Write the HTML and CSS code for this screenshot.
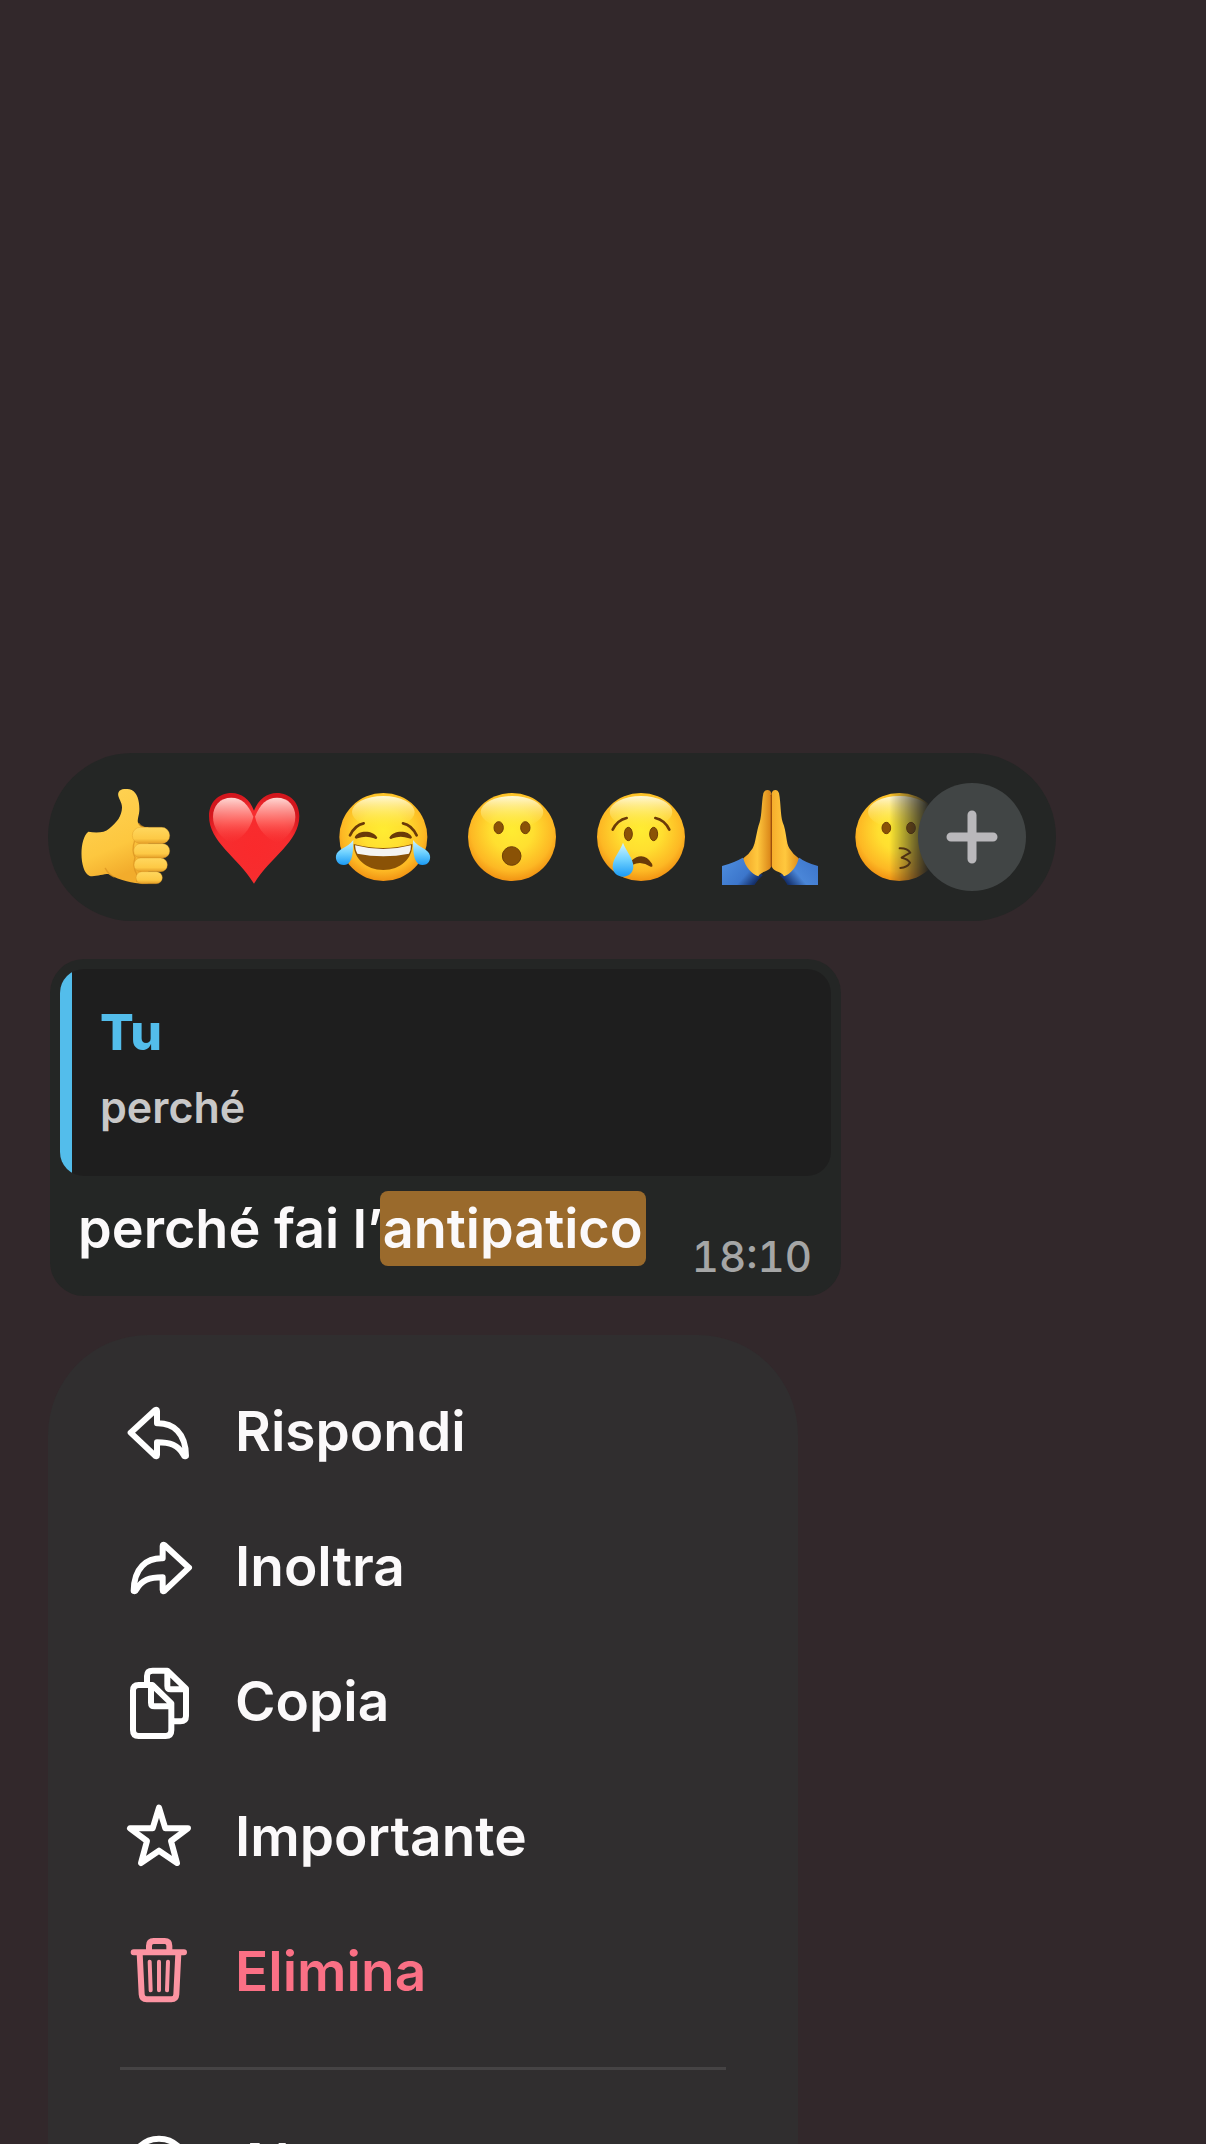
FILE: index.html
```html
<!DOCTYPE html>
<html lang="it">
<head>
<meta charset="utf-8">
<meta name="viewport" content="width=device-width, initial-scale=1">
<title>Messaggio</title>
<link rel="stylesheet" href="styles.css">
</head>
<body>
<svg class="defs" aria-hidden="true">
  <defs>
    <radialGradient id="face" cx="0.5" cy="0.42" r="0.6">
      <stop offset="0" stop-color="#ffec32"/>
      <stop offset="0.4" stop-color="#ffdf30"/>
      <stop offset="0.78" stop-color="#fdb824"/>
      <stop offset="1" stop-color="#ef8c10"/>
    </radialGradient>
    <linearGradient id="shine" x1="0" y1="0" x2="0" y2="1">
      <stop offset="0" stop-color="#fffbe0" stop-opacity="0.95"/>
      <stop offset="1" stop-color="#ffec50" stop-opacity="0"/>
    </linearGradient>
    <linearGradient id="tear" x1="0" y1="0" x2="0" y2="1">
      <stop offset="0" stop-color="#d2f4ff"/>
      <stop offset="0.5" stop-color="#70d2ff"/>
      <stop offset="1" stop-color="#1b9af4"/>
    </linearGradient>
    <radialGradient id="heart" cx="0.5" cy="0.6" r="0.6">
      <stop offset="0" stop-color="#fa2a2c"/>
      <stop offset="0.7" stop-color="#f62d2f"/>
      <stop offset="1" stop-color="#d3161d"/>
    </radialGradient>
    <linearGradient id="heart-shine" x1="0" y1="0" x2="0" y2="1">
      <stop offset="0" stop-color="#ffd8d4"/>
      <stop offset="0.55" stop-color="#ff6a64" stop-opacity="0.8"/>
      <stop offset="1" stop-color="#fa3a38" stop-opacity="0"/>
    </linearGradient>
    <linearGradient id="skin" x1="0" y1="0" x2="0.3" y2="1">
      <stop offset="0" stop-color="#ffd456"/>
      <stop offset="0.7" stop-color="#fdc73f"/>
      <stop offset="1" stop-color="#f2ac2c"/>
    </linearGradient>
    <linearGradient id="finger" x1="0" y1="0" x2="0" y2="1">
      <stop offset="0" stop-color="#ffd75e"/>
      <stop offset="0.7" stop-color="#fdc945"/>
      <stop offset="1" stop-color="#e39c26"/>
    </linearGradient>
    <linearGradient id="palm-left" x1="0" y1="0" x2="1" y2="0">
      <stop offset="0" stop-color="#f0a326"/>
      <stop offset="0.5" stop-color="#ffc83e"/>
      <stop offset="1" stop-color="#d98317"/>
    </linearGradient>
    <linearGradient id="palm-right" x1="1" y1="0" x2="0" y2="0">
      <stop offset="0" stop-color="#e08f1c"/>
      <stop offset="0.5" stop-color="#ffc83e"/>
      <stop offset="1" stop-color="#f5ad2c"/>
    </linearGradient>
    <linearGradient id="sleeve-left" x1="0" y1="0" x2="1" y2="0.6">
      <stop offset="0" stop-color="#4f8fe0"/>
      <stop offset="0.7" stop-color="#3c76cb"/>
      <stop offset="1" stop-color="#14306c"/>
    </linearGradient>
    <linearGradient id="sleeve-right" x1="1" y1="0" x2="0" y2="0.6">
      <stop offset="0" stop-color="#3b73c9"/>
      <stop offset="0.65" stop-color="#4a86d8"/>
      <stop offset="1" stop-color="#14306c"/>
    </linearGradient>
  </defs>
</svg>

<main class="screen">
  <div class="reactions" role="group" aria-label="Reazioni">
    <div class="reaction-list">
      <button class="reaction" type="button" aria-label="Pollice in su">
        <svg viewBox="111 147 288 288">
          <path fill="url(#skin)" d="M145 275C166 279 194 279 207 266C232 246 245 228 246 203C247 185 229 170 236 156C241 145 262 145 275 150C293 160 299 184 298 212C297 228 291 238 294 248C300 260 312 262 325 262L325 430C290 433 250 426 205 402C190 402 165 411 149 408C117 395 117 295 145 275Z"/>
          <path fill="none" stroke="#d99220" stroke-width="4" stroke-linecap="round" opacity="0.7" d="M296 250C300 258 306 261 314 263M196 385Q205 402 222 411M284 302Q274 330 285 352Q277 380 290 402V424"/>
          <g fill="url(#finger)" stroke="#d99220" stroke-width="1">
            <rect x="277" y="262" width="112" height="49" rx="24"/>
            <rect x="281" y="311" width="108" height="43" rx="21"/>
            <rect x="282" y="354" width="100" height="41" rx="20"/>
            <rect x="288" y="395" width="79" height="36" rx="18"/>
          </g>
        </svg>
      </button>
      <button class="reaction" type="button" aria-label="Cuore">
        <svg viewBox="498 147 288 288">
          <path fill="url(#heart)" d="M642 212C655 178 682 159 710 159C750 159 778 188 778 228C778 306 692 350 642 431C592 350 507 306 507 228C507 188 535 159 575 159C603 159 630 178 642 212Z"/>
          <path fill="url(#heart-shine)" d="M640 230C624 192 605 173 574 173C540 173 519 197 519 230C519 265 542 290 570 310C600 300 632 270 640 230Z"/>
          <path fill="url(#heart-shine)" d="M645 230C660 192 680 173 711 173C745 173 766 197 766 230C766 265 743 290 715 310C685 300 653 270 645 230Z"/>
        </svg>
      </button>
      <button class="reaction" type="button" aria-label="Risata con lacrime">
        <svg viewBox="885 147 288 288">
          <circle cx="1030" cy="291" r="132" fill="url(#face)"/>
          <ellipse cx="1030" cy="216" rx="94" ry="48" fill="url(#shine)"/>
          <path fill="none" stroke="#6a3a08" stroke-width="8" stroke-linecap="round" d="M930 286Q945 255 971 250M1130 286Q1115 255 1089 250"/>
          <path fill="#6a3a08" d="M944 292C954 270 1000 270 1012 293Q1009 300 1002 295Q978 286 953 295Q946 299 944 292ZM1048 293C1060 270 1106 270 1116 292Q1114 299 1107 295Q1082 286 1058 295Q1051 300 1048 293Z"/>
          <path fill="#8a5206" d="M941 312Q1030 336 1117 312C1118 355 1082 390 1030 390C978 390 941 355 941 312Z"/>
          <path fill="#f4f4f2" d="M945 316Q1030 338 1113 316Q1113 332 1107 341Q1030 356 952 341Q946 332 945 316Z"/>
          <path fill="url(#tear)" d="M940 300C939 322 942 374 912 375C893 375 886 360 888 347C892 326 922 325 940 300Z"/>
          <path fill="url(#tear)" d="M1119 300C1120 322 1117 374 1147 375C1166 375 1172 360 1170 347C1166 326 1137 325 1119 300Z"/>
        </svg>
      </button>
      <button class="reaction" type="button" aria-label="Stupore">
        <svg viewBox="72 147 288 288">
          <circle cx="216" cy="291" r="132" fill="url(#face)"/>
          <ellipse cx="216" cy="216" rx="94" ry="48" fill="url(#shine)"/>
          <g fill="#8a5206" stroke="#6f3f06" stroke-width="3">
            <ellipse cx="176" cy="263" rx="14" ry="18"/>
            <ellipse cx="256" cy="263" rx="14" ry="18"/>
            <circle cx="215" cy="348" r="28"/>
          </g>
        </svg>
      </button>
      <button class="reaction" type="button" aria-label="Pianto">
        <svg viewBox="459 147 288 288">
          <circle cx="603" cy="291" r="132" fill="url(#face)"/>
          <ellipse cx="603" cy="216" rx="94" ry="48" fill="url(#shine)"/>
          <g fill="#8a5206" stroke="#6f3f06" stroke-width="3">
            <ellipse cx="565" cy="282" rx="12" ry="20"/>
            <ellipse cx="641" cy="282" rx="12" ry="20"/>
          </g>
          <path fill="none" stroke="#6a3a08" stroke-width="8" stroke-linecap="round" d="M518 269Q532 240 560 234M688 269Q674 240 646 234"/>
          <path fill="#6a3a08" d="M574 362Q610 332 636 371Q640 382 632 380Q605 362 578 374Z"/>
          <path fill="url(#tear)" d="M549 308C558 333 580 355 580 379C580 398 567 410 549 410C531 410 518 398 518 379C518 355 541 333 549 308Z"/>
        </svg>
      </button>
      <button class="reaction" type="button" aria-label="Mani giunte">
        <svg viewBox="846 147 288 288">
          <path fill="url(#sleeve-left)" d="M846 378Q885 367 908 353L968 406Q955 418 943 435H846Z"/>
          <path fill="url(#sleeve-right)" d="M1134 378Q1095 367 1078 353L1019 406Q1033 418 1043 435H1134Z"/>
          <path fill="url(#palm-left)" d="M994 160C992 147 974 146 970 160C964 190 966 225 959 247C949 275 947 310 938 325Q928 342 910 355C915 380 935 402 955 409C964 391 992 397 994 376Z"/>
          <path fill="url(#palm-right)" d="M995 160C997 147 1014 146 1017 160C1023 190 1021 225 1028 247C1040 275 1038 310 1048 325Q1058 342 1076 355C1071 380 1052 402 1032 409C1022 391 996 397 995 376Z"/>
          <path fill="none" stroke="#9c4f0c" stroke-width="4" stroke-linecap="round" d="M994 166V378"/>
        </svg>
      </button>
      <button class="reaction reaction-faded" type="button" aria-label="Bacio">
        <svg viewBox="93 147 288 288">
          <circle cx="238" cy="291" r="132" fill="url(#face)"/>
          <ellipse cx="238" cy="216" rx="94" ry="48" fill="url(#shine)"/>
          <g fill="#8a5206" stroke="#6f3f06" stroke-width="3">
            <ellipse cx="199" cy="264" rx="13" ry="17"/>
            <ellipse cx="273" cy="264" rx="13" ry="17"/>
          </g>
          <path fill="none" stroke="#6a3a08" stroke-width="6" stroke-linecap="round" stroke-linejoin="round" d="M239 325Q262 324 271 338Q258 345 245 353Q264 357 270 368Q262 382 241 384"/>
        </svg>
      </button>
    </div>
    <button class="more-reactions" type="button" aria-label="Altre reazioni">
      <svg viewBox="0 0 108 108"><path d="M54 32V76M33 54H75"/></svg>
    </button>
  </div>

  <article class="bubble">
    <blockquote class="quote">
      <p class="quote-author">Tu</p>
      <p class="quote-text">perché</p>
    </blockquote>
    <div class="message">
      <p class="message-text">perché fai l’<mark>antipatico</mark></p>
      <time class="message-time" datetime="18:10">18:10</time>
    </div>
  </article>

  <nav class="menu" aria-label="Azioni">
    <button class="item" type="button">
      <svg class="icon" viewBox="249 228 216 216"><path d="M272 338L346 270Q351 267 351 273V310C400 309 437 338 438 408Q433 410 431 405C414 374 390 367 351 367V405Q351 411 345 407Z"/></svg>
      <span>Rispondi</span>
    </button>
    <button class="item" type="button">
      <svg class="icon" viewBox="249 633 216 216"><path d="M447 743L373 675Q368 672 368 678V715C319 714 282 743 281 813Q286 815 288 810C305 779 329 772 368 772V810Q368 816 374 812Z"/></svg>
      <span>Inoltra</span>
    </button>
    <button class="item" type="button">
      <svg class="icon" viewBox="39 78 216 216"><path d="M69 152Q69 135 86 135H127L184 190V270Q184 288 167 288H86Q69 288 69 270ZM123 137V188Q123 199 134 199H184M111 134V108Q111 92 128 92H172L228 146V228Q228 244 211 244H194M172 94V138Q172 148 182 148H228"/></svg>
      <span>Copia</span>
    </button>
    <button class="item" type="button">
      <svg class="icon" viewBox="39 483 216 216"><path d="M147 503L166 565H234L183 603L201 669L147 632L93 669L111 603L60 565H128Z"/></svg>
      <span>Importante</span>
    </button>
    <button class="item item-danger" type="button">
      <svg class="icon" viewBox="39 108 216 216"><path d="M71 157H222M117 155V137Q117 123 131 123H164Q178 123 178 137V155M89 160L95 283Q96 298 110 298H184Q198 298 199 283L205 160"/><path class="thin" d="M119 185L122 271M147 185V271M174 185L171 271"/></svg>
      <span>Elimina</span>
    </button>
    <hr class="divider">
    <button class="item" type="button">
      <svg class="icon" viewBox="0 6 216 216"><circle cx="108" cy="122" r="84"/><path d="M72 122h1M108 122h1M144 122h1"/></svg>
      <span>Altro…</span>
    </button>
  </nav>
</main>
</body>
</html>
```
FILE: styles.css
```css
* {
  box-sizing: border-box;
}

body {
  margin: 0;
  background: #32282b;
  color: #fbf9fa;
  font-family: Inter, "Liberation Sans", sans-serif;
  font-weight: 600;
}

p,
blockquote {
  margin: 0;
}

button {
  padding: 0;
  border: 0;
  background: none;
  color: inherit;
  font: inherit;
}

.defs {
  position: absolute;
  width: 0;
  height: 0;
}

.screen {
  display: flex;
  flex-direction: column;
  height: 100vh;
  padding: 753px 48px 0;
  overflow: hidden;
}

/* Reaction bar */
.reactions {
  display: flex;
  flex-shrink: 0;
  align-items: center;
  width: 100%;
  max-width: 1008px;
  height: 168px;
  padding: 0 30px 0 29px;
  border-radius: 84px;
  background: #242625;
}

/* The list runs on under the round button */
.reaction-list {
  display: flex;
  flex: 1;
  gap: 33px;
  min-width: 0;
  margin-right: -54px;
  overflow: hidden;
}

.reaction {
  flex: none;
  width: 96px;
  height: 96px;
}

.reaction svg,
.more-reactions svg {
  display: block;
  width: 100%;
  height: 100%;
}

.reaction-faded {
  -webkit-mask-image: linear-gradient(to right, #000 40%, transparent 82%);
  mask-image: linear-gradient(to right, #000 40%, transparent 82%);
}

.more-reactions {
  position: relative;
  flex: none;
  width: 108px;
  height: 108px;
  border-radius: 50%;
  background: #414545;
}

.more-reactions path {
  fill: none;
  stroke: #b9b8bb;
  stroke-width: 9;
  stroke-linecap: round;
}

/* Message */
.bubble {
  flex-shrink: 0;
  width: 100%;
  max-width: 791px;
  margin: 38px 0 0 2px;
  padding: 10px 10px 15px;
  border-radius: 34px;
  background: #242625;
}

.quote {
  display: grid;
  gap: 15px;
  padding: 33px 40px 39px;
  border-radius: 24px;
  background: linear-gradient(to right, #53bdeb 12px, #1e1e1e 12px);
  line-height: 60px;
}

.quote-author {
  color: #53bdeb;
  font-size: 50px;
  font-weight: 800;
}

.quote-text {
  color: #c8c8c8;
  font-size: 43px;
  font-weight: 600;
}

.message {
  display: flex;
  align-items: flex-end;
  justify-content: space-between;
  height: 90px;
  margin-top: 15px;
  padding: 0 19px 0 18px;
}

.message-text {
  align-self: flex-start;
  font-size: 54px;
  line-height: 75px;
}

.message-text mark {
  margin: 0 -3px;
  padding: 5px 3px;
  border-radius: 8px;
  background: #9a6a2c;
  color: inherit;
}

.message-time {
  color: #a5a6a6;
  font-size: 42px;
  font-variant-numeric: tabular-nums;
  font-weight: 500;
  line-height: 48px;
}

/* Context menu */
.menu {
  display: flex;
  flex-direction: column;
  flex-shrink: 0;
  width: 100%;
  max-width: 750px;
  margin-top: 39px;
  padding: 29px 0;
  border-radius: 100px;
  background: #302e2f;
}

.item {
  display: flex;
  align-items: center;
  gap: 40px;
  height: 135px;
  padding: 0 75px;
  font-size: 55px;
  line-height: 75px;
}

.item-danger {
  color: #fb7085;
}

.icon {
  flex: none;
  width: 72px;
  height: 72px;
  overflow: visible;
  fill: none;
  stroke: #fff;
  stroke-width: 18;
  stroke-linecap: round;
  stroke-linejoin: round;
}

.icon .thin {
  stroke-width: 12;
}

.item-danger .icon {
  stroke: #fc94a2;
}

.divider {
  width: auto;
  height: 3px;
  margin: 28px 72px 26px;
  border: 0;
  background: #454344;
}
```
